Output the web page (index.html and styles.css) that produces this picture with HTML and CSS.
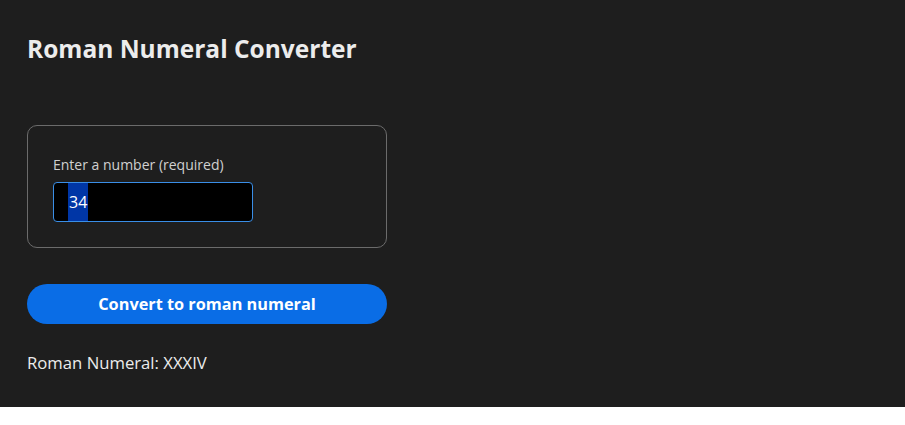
FILE: index.html
```html
<!DOCTYPE html>
<html lang="en">
<head>
<meta charset="utf-8">
<title>Roman Numeral Converter</title>
<link rel="stylesheet" href="styles.css">
</head>
<body>
<main class="app">
  <h1 class="title">Roman Numeral Converter</h1>
  <form class="form">
    <fieldset class="card">
      <label class="label" for="num">Enter a number (required)</label>
      <div class="field"><span class="sel">34</span></div>
    </fieldset>
    <button type="button" class="btn">Convert to roman numeral</button>
  </form>
  <p class="result">Roman Numeral: XXXIV</p>
</main>
</body>
</html>
```

FILE: styles.css
```css
html, body {
  margin: 0;
  padding: 0;
  background: #ffffff;
}
.app {
  background: #1e1e1e;
  color: #e6e6e6;
  font-family: "Open Sans", "Noto Sans", sans-serif;
  padding: 27px 27px 24px;
  height: 407px;
  box-sizing: border-box;
}
.title {
  margin: 0;
  font-size: 24.5px;
  font-weight: 700;
  line-height: 44px;
  color: #ececec;
  letter-spacing: 0;
}
.form {
  margin-top: 54px;
  width: 360px;
}
.card {
  margin: 0;
  border: 1px solid #6b6b6b;
  border-radius: 10px;
  padding: 29px 25px 25px;
  display: flex;
  flex-direction: column;
  gap: 7px;
}
.label {
  font-size: 14px;
  line-height: 20px;
  color: #d0d0d0;
}
.field {
  width: 200px;
  height: 40px;
  box-sizing: border-box;
  background: #000;
  border: 1px solid #3a8ee6;
  border-radius: 4px;
  padding-left: 14px;
  display: flex;
  align-items: stretch;
}
.sel {
  background: #0036a6;
  color: #fff;
  font-size: 16px;
  line-height: 38px;
  padding: 0 1px;
}
.btn {
  margin-top: 36px;
  width: 360px;
  height: 40px;
  border: none;
  border-radius: 20px;
  background: #0a6de6;
  color: #fff;
  font-family: "Open Sans", "Noto Sans", sans-serif;
  font-weight: 700;
  font-size: 16.3px;
}
.result {
  margin: 25px 0 0;
  font-size: 16.7px;
  line-height: 28px;
  color: #ececec;
}
```
